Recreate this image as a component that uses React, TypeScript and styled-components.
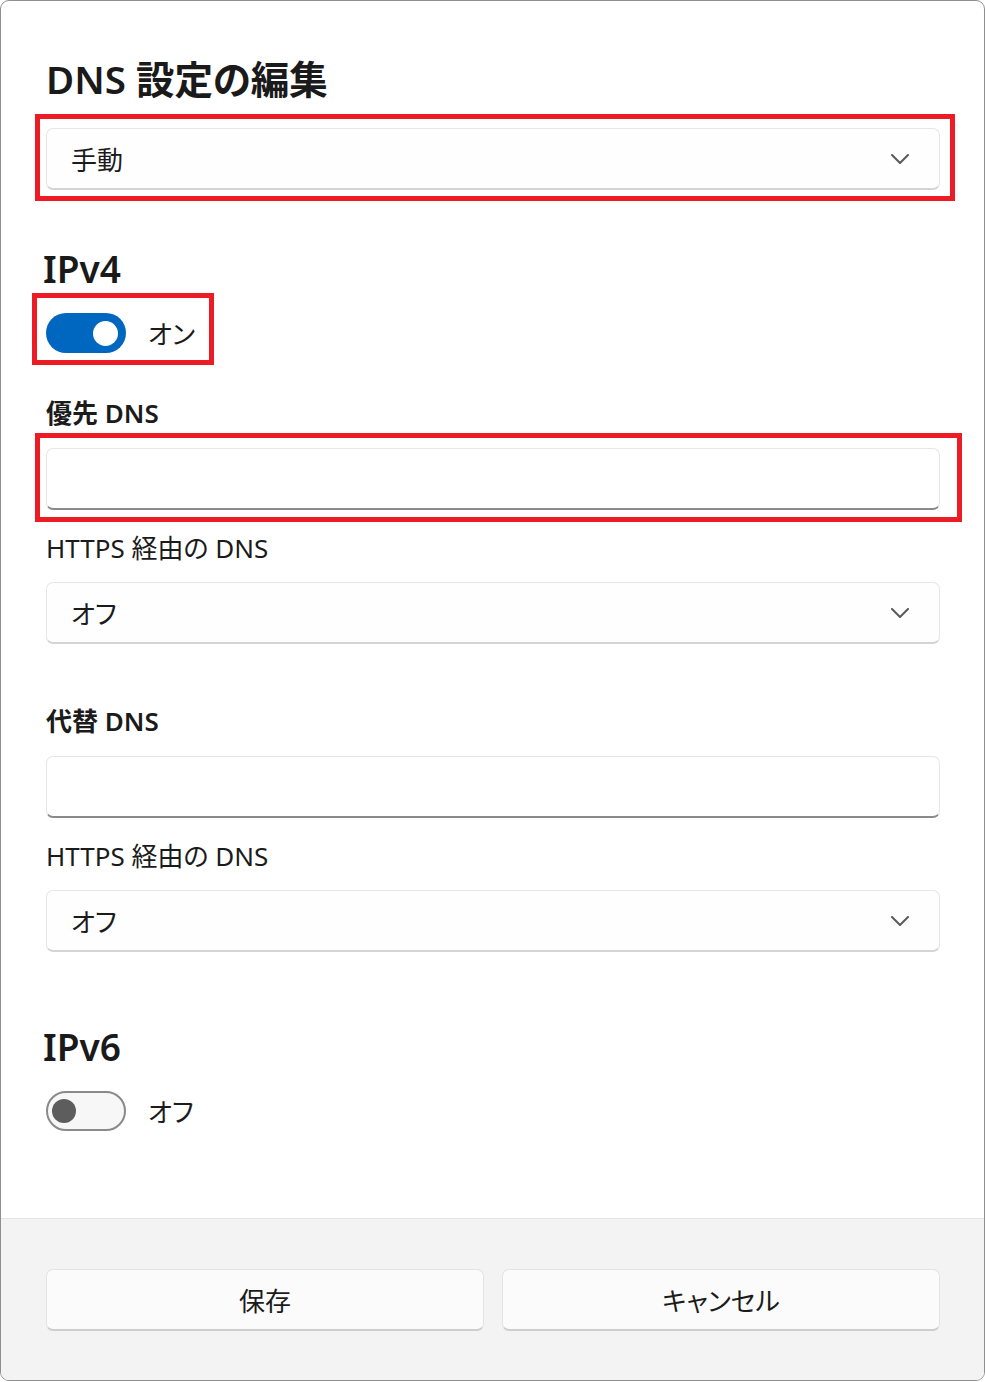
import styled, { createGlobalStyle } from "styled-components";
import { useState } from "react";

const GlobalStyle = createGlobalStyle`
  html, body {
    margin: 0;
    padding: 0;
    background: #ffffff;
  }
  body {
    font-family: "Noto Sans", "Noto Sans CJK JP", sans-serif;
    font-feature-settings: "palt";
    color: #1b1b1b;
  }
  * {
    box-sizing: border-box;
  }
`;

const Dialog = styled.div`
  width: 985px;
  height: 1381px;
  display: flex;
  flex-direction: column;
  background: #ffffff;
  border: 1px solid #8f8f8f;
  border-radius: 9px;
  overflow: hidden;
`;

const Body = styled.div`
  flex: 1;
  display: flex;
  flex-direction: column;
  padding: 54px 44px 0 45px;
`;

const Title = styled.h1`
  margin: 0 0 25px;
  font-size: 38.5px;
  line-height: 48px;
  font-weight: 600;
  color: #1a1a1a;
`;

const Heading = styled.h2<{ $mt: number }>`
  margin: ${(p) => p.$mt}px 0 0 -3px;
  font-size: 37px;
  line-height: 48px;
  font-weight: 600;
  color: #1a1a1a;
`;

const Label = styled.div<{ $mt: number; $strong?: boolean }>`
  margin-top: ${(p) => p.$mt}px;
  font-size: 26px;
  line-height: 36px;
  font-weight: ${(p) => (p.$strong ? 600 : 400)};
`;

// red annotation frame drawn over the marked control
const Marked = styled.div<{
  $mt: number;
  $fit?: boolean;
  $t: number;
  $r: number;
  $b: number;
  $l: number;
}>`
  position: relative;
  margin-top: ${(p) => p.$mt}px;
  width: ${(p) => (p.$fit ? "fit-content" : "auto")};
  &::after {
    content: "";
    position: absolute;
    top: ${(p) => -p.$t}px;
    right: ${(p) => -p.$r}px;
    bottom: ${(p) => -p.$b}px;
    left: ${(p) => -p.$l}px;
    border: 5px solid #ed1c24;
    pointer-events: none;
  }
`;

const Select = styled.div<{ $mt?: number }>`
  margin-top: ${(p) => p.$mt || 0}px;
  height: 62px;
  display: flex;
  align-items: center;
  justify-content: space-between;
  padding: 0 30px 0 24px;
  background: #fefefe;
  border: 1px solid #e6e6e6;
  border-bottom: 2px solid #d4d4d4;
  border-radius: 7px;
  font-size: 26px;
  color: #1b1b1b;
`;

const Input = styled.input<{ $mt?: number }>`
  display: block;
  width: 100%;
  margin-top: ${(p) => p.$mt || 0}px;
  height: 62px;
  padding: 0 24px;
  background: #ffffff;
  border: 1px solid #e6e6e6;
  border-bottom: 2px solid #8a8a8a;
  border-radius: 7px;
  font-family: inherit;
  font-size: 26px;
  outline: none;
`;

const ToggleRow = styled.label<{ $mt?: number }>`
  margin-top: ${(p) => p.$mt || 0}px;
  height: 40px;
  display: flex;
  align-items: center;
  gap: 22px;
  font-size: 26px;
  cursor: pointer;
  width: fit-content;
`;

const Track = styled.span<{ $on: boolean }>`
  width: 80px;
  height: 40px;
  border-radius: 20px;
  display: flex;
  align-items: center;
  padding: ${(p) => (p.$on ? "0 8px 0 0" : "0 0 0 4px")};
  justify-content: ${(p) => (p.$on ? "flex-end" : "flex-start")};
  background: ${(p) => (p.$on ? "#0067c0" : "#f7f7f7")};
  border: ${(p) => (p.$on ? "none" : "2px solid #8a8a8a")};
`;

const Knob = styled.span<{ $on: boolean }>`
  width: ${(p) => (p.$on ? 25 : 24)}px;
  height: ${(p) => (p.$on ? 25 : 24)}px;
  border-radius: 50%;
  background: ${(p) => (p.$on ? "#ffffff" : "#5d5d5d")};
`;

const Footer = styled.div`
  height: 162px;
  display: grid;
  grid-template-columns: 1fr 1fr;
  gap: 18px;
  align-content: start;
  padding: 50px 44px 0 45px;
  background: #f3f3f3;
  border-top: 1px solid #e3e3e3;
`;

const Button = styled.button`
  height: 62px;
  background: #fbfbfb;
  border: 1px solid #e3e3e3;
  border-bottom: 2px solid #cdcdcd;
  border-radius: 7px;
  font-family: inherit;
  font-feature-settings: "palt";
  font-size: 26px;
  color: #1b1b1b;
  cursor: pointer;
`;

const Chevron = () => (
  <svg width="18" height="10" viewBox="0 0 18 10" fill="none">
    <path
      d="M1 1 L9 9 L17 1"
      stroke="#5a5a5a"
      strokeWidth="2"
      strokeLinecap="round"
      strokeLinejoin="round"
    />
  </svg>
);

const Toggle = ({
  on,
  onChange,
  mt,
}: {
  on: boolean;
  onChange: () => void;
  mt?: number;
}) => (
  <ToggleRow $mt={mt} onClick={onChange}>
    <Track $on={on}>
      <Knob $on={on} />
    </Track>
    <span>{on ? "オン" : "オフ"}</span>
  </ToggleRow>
);

export default function App() {
  const [v4, setV4] = useState(true);
  const [v6, setV6] = useState(false);

  return (
    <>
      <GlobalStyle />
      <Dialog>
        <Body>
          <Title>DNS 設定の編集</Title>
          <Marked $mt={0} $t={14} $r={15} $b={11} $l={11}>
            <Select>
              <span>手動</span>
              <Chevron />
            </Select>
          </Marked>

          <Heading $mt={55}>IPv4</Heading>
          <Marked $mt={20} $fit $t={20} $r={19} $b={12} $l={14}>
            <Toggle on={v4} onChange={() => setV4(!v4)} />
          </Marked>

          <Label $mt={42} $strong>
            優先 DNS
          </Label>
          <Marked $mt={17} $t={15} $r={22} $b={12} $l={11}>
            <Input />
          </Marked>
          <Label $mt={20}>HTTPS 経由の DNS</Label>
          <Select $mt={16}>
            <span>オフ</span>
            <Chevron />
          </Select>

          <Label $mt={59} $strong>
            代替 DNS
          </Label>
          <Input $mt={17} />
          <Label $mt={20}>HTTPS 経由の DNS</Label>
          <Select $mt={16}>
            <span>オフ</span>
            <Chevron />
          </Select>

          <Heading $mt={71}>IPv6</Heading>
          <Toggle mt={20} on={v6} onChange={() => setV6(!v6)} />
        </Body>
        <Footer>
          <Button>保存</Button>
          <Button>キャンセル</Button>
        </Footer>
      </Dialog>
    </>
  );
}
